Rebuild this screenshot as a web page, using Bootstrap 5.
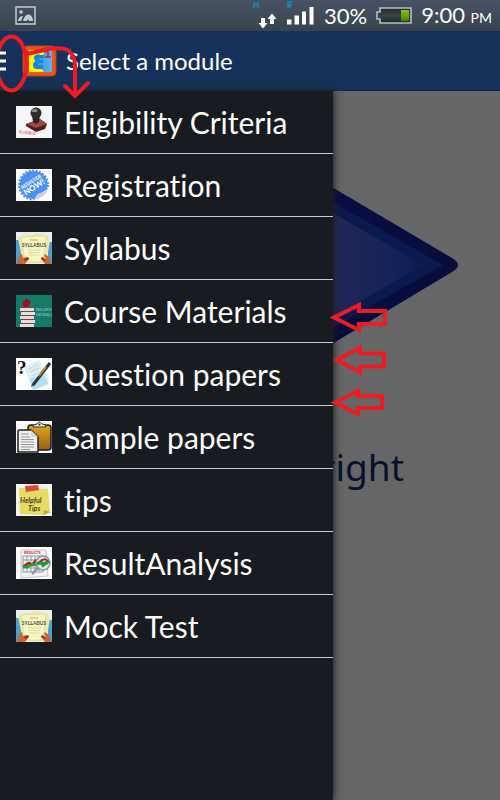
<!DOCTYPE html>
<html lang="en">
<head>
<meta charset="utf-8">
<meta name="viewport" content="width=device-width, initial-scale=1">
<title>Select a module</title>
<link href="https://cdn.jsdelivr.net/npm/bootstrap@5.3.0/dist/css/bootstrap.min.css" rel="stylesheet">
<style>
  body { font-family: Lato, "Open Sans", sans-serif; font-variant-ligatures: none; background: #666; color: #fff; }
  .status-bar { height: 31px; background: linear-gradient(#475364, #38434e); padding: 0 8px 0 15px; }
  .status-text { font-size: 22px; line-height: 31px; }
  .status-text small { font-size: 14px; }
  .title-bar { height: 60px; background: #16325a; border-bottom: 1px solid #0f2649; }
  .page-title { font-size: 24px; line-height: 30px; }
  .stage > * { grid-area: 1 / 1; }
  .stage { grid-template-columns: 100%; }
  .swipe-hint { font-family: "Noto Sans", sans-serif; font-size: 37px; line-height: 48px; color: #06122b; padding-right: 96px; margin-top: 32px; }
  .drawer { width: 66.6%; background: #181b1f; box-shadow: 1px 0 7px #222; z-index: 1; }
  .module { height: 63px; padding: 0 16px; gap: 12px; border-bottom: 1px solid #c5cac9; color: #fff; font-size: 30px; line-height: 36px; }
  .module svg { width: 36px; height: 32px; }
  .module:hover { color: #fff; background: #22272d; }
  .notes { pointer-events: none; z-index: 2; }
</style>
<script src="https://cdn.jsdelivr.net/npm/bootstrap@5.3.0/dist/js/bootstrap.bundle.min.js"></script>
</head>
<body class="min-vh-100 d-flex flex-column position-relative overflow-x-hidden">
<header>
  <div class="status-bar d-flex align-items-center justify-content-between">
    <svg width="21" height="19" viewBox="0 0 21 19" aria-hidden="true"><path d="M1 1h19v17H1z" fill="none" stroke="#c5cacf" stroke-width="1.5"/><circle cx="6" cy="6" r="1.8" fill="#c5cacf"/><path d="M3 15c.5-3 2-5 5-5l-2 5zM8 15c1-4 3-7 6-6.500 2.500.5 4 3 4 6.500h-4l-1-2-1 2z" fill="#c5cacf"/></svg>
    <div class="d-flex align-items-center">
      <svg width="64" height="31" viewBox="252 0 64 31" aria-hidden="true">
        <g fill="none" stroke="#128bc8" stroke-width="1.400"><path d="M254 2v6M258 2v6M254 5h4M288 8V2h3v3h-3l3 3"/></g>
        <path d="M261 18h4v5h2.500L263 28.500 258.500 23h2.500zM270 24h4v-5h2.500L272 13.500 267.500 19h2.500z" fill="#fff"/>
        <path d="M287 19.500h4.500v5H287zM294.500 15.500h4.500v9h-4.500zM302 11.500h4v13h-4zM309.500 7h4v17.500h-4z" fill="#fff"/>
      </svg>
      <span class="status-text ms-2">30%</span>
      <svg class="ms-2" width="38" height="19" viewBox="0 0 38 19" aria-hidden="true">
        <defs><linearGradient id="cell" x2="0" y2="1"><stop stop-color="#252a2d"/><stop offset=".5" stop-color="#3c4246"/><stop offset="1" stop-color="#22272a"/></linearGradient><linearGradient id="charge" x2="0" y2="1"><stop stop-color="#7fbf2d"/><stop offset=".5" stop-color="#64a90c"/><stop offset="1" stop-color="#3d8200"/></linearGradient></defs>
        <path d="M5 2h31v15H5v-4H2V6h3z" fill="url(#cell)" stroke="#b7bcc1" stroke-width="1.600"/>
        <path d="M26 4h8v11h-8z" fill="url(#charge)"/>
      </svg>
      <span class="status-text ms-2">9:00 <small>PM</small></span>
    </div>
  </div>
  <nav class="title-bar d-flex align-items-center">
    <button type="button" class="btn p-0 border-0 d-flex" aria-label="Menu"><svg width="22" height="20" viewBox="0 0 22 20"><path d="M0 2h6M0 10h6M0 18h6" stroke="#fff" stroke-width="3"/></svg></button>
    <svg width="36" height="32" viewBox="0 0 36 32" aria-hidden="true">
      <defs><linearGradient id="sky"><stop stop-color="#1689e2"/><stop offset="1" stop-color="#5fb3ed"/></linearGradient></defs>
      <rect x="1" y="1" width="33" height="30" rx="4" fill="#e4581c" stroke="#b8420e"/>
      <rect x="7" y="5" width="23" height="22" fill="url(#sky)"/>
      <path d="M7 5h13l2 3-1 3-5-2-4 2 2 3-1 3-2 3 3 3 6 1 2 3H7z" fill="#f7f209"/>
      <path d="M22 10h-6q-4 0-4 3 0 2 2 3-3 1-3 4 0 4 4 4h6v-4h-5q-1-2 1-2h4v-3h-4q-1-2 1-2h4z" fill="#1487df"/>
      <path d="M23 7l3-1v6m-3 0h6" stroke="#d51b2b" stroke-width="1.500" fill="none"/>
    </svg>
    <h1 class="page-title fw-normal m-0 ms-2">Select a module</h1>
  </nav>
</header>
<div class="stage d-grid flex-grow-1">
  <main>
    <svg class="d-block w-100" viewBox="0 91 500 320" aria-hidden="true">
      <defs><linearGradient id="face" gradientUnits="userSpaceOnUse" x1="333" y1="0" x2="425" y2="0"><stop stop-color="#1f2854"/><stop offset=".6" stop-color="#16235a"/><stop offset="1" stop-color="#0b1b53"/></linearGradient><linearGradient id="rim" x2="0" y2="1"><stop stop-color="#0c0d46"/><stop offset="1" stop-color="#040c35"/></linearGradient></defs>
      <path d="M220 121L452 258q12 7 0 14L220 411z" fill="url(#rim)"/>
      <path d="M240 149L443 265 240 381z" fill="#0a194e"/>
      <path d="M250 165L423 265 250 365z" fill="url(#face)"/>
    </svg>
    <p class="swipe-hint text-end mb-0">right</p>
  </main>
  <nav class="drawer" aria-label="Modules">
    <a href="#" class="module d-flex align-items-center text-decoration-none">
      <svg viewBox="0 0 36 32" aria-hidden="true"><rect width="36" height="32" fill="#f3f5f6"/><path d="M10 18l14-5 7 5-2 5-9 3-10-6z" fill="#56191a"/><path d="M10 18l14-5 7 5-11 4z" fill="#9a4a40"/><path d="M16 9h8l-1 7q-3 3-6 0z" fill="#292424"/><circle cx="20" cy="7" r="5.500" fill="#302d2d"/><ellipse cx="18.500" cy="4.500" rx="3" ry="1.500" fill="#918b88"/><text x="3" y="27" font-size="4" font-weight="700" fill="#e65561" transform="rotate(7 3 27)">ELIGIBLE</text></svg>
      <span>Eligibility Criteria</span></a>
    <a href="#" class="module d-flex align-items-center text-decoration-none">
      <svg viewBox="0 0 36 32" aria-hidden="true"><rect width="36" height="32" fill="#fff"/><circle cx="17.500" cy="16" r="14" fill="#4b91f4"/><circle cx="17.500" cy="16" r="14.500" fill="none" stroke="#4b91f4" stroke-width="2" stroke-dasharray="2 1.500"/><path d="M18 31q6-7 14-11l4 2v10H18z" fill="#fff"/><path d="M18 31q2-5 5-7 5 0 9-4-3 8-14 11z" fill="#c8cdd4"/><g transform="rotate(-32 17 16)" fill="#fff" text-anchor="middle" font-weight="900"><text x="17" y="14" font-size="5">REGISTER</text><text x="17" y="21" font-size="8">NOW!</text></g></svg>
      <span>Registration</span></a>
    <a href="#" class="module d-flex align-items-center text-decoration-none">
      <svg viewBox="0 0 36 32" aria-hidden="true"><g id="syllabus-card"><rect width="36" height="32" fill="#e8eef0"/><path d="M0 8h5v24H0zM32 10h4v22h-4z" fill="#4f9ed0"/><path d="M2 6l8-4 5 1 5-2 12 3 2 5-4 22H7z" fill="#e9e9a5"/><path d="M5 5l25-1-3 26H9z" fill="#f6f5c4" stroke="#d7d992" stroke-width=".6"/><path d="M14 8h8" stroke="#e5a34a"/><text x="18" y="15" font-size="5" font-weight="700" text-anchor="middle" fill="#4d5137">SYLLABUS</text><path d="M12 18h13M12 20.500h12M13 23h10" stroke="#d8d886" stroke-width=".8"/><path d="M1 32l2-8 3-2 1 4 4-1 2 2-4 5zM35 32l-1-6-5-4-1 2 2 3-4-2-1 2 4 5z" fill="#c96735"/><path d="M8 27l4-2 1 2-4 2zM26 25l4 3-1 1-4-2z" fill="#a82720"/></g></svg>
      <span>Syllabus</span></a>
    <a href="#" class="module d-flex align-items-center text-decoration-none">
      <svg viewBox="0 0 36 32" aria-hidden="true"><rect width="36" height="32" fill="#17796a"/><path d="M4 13h14v3H4zM5 17h14v3H5zM4 21h14v3H4zM5 25h14v3H5zM4 29h14v3H4z" fill="#e5dddb"/><path d="M4 12.500h14M5 16.500h14M4 20.500h14M5 24.500h14M4 28.500h14" stroke="#734246"/><path d="M11 5q4-2 3 3 0 4-4 4-4 0-3-5 1-3 4-2z" fill="#a80d1c"/><path d="M10.500 6V3.500" stroke="#471e18"/><g font-size="3" fill="#a5d2c8"><text x="20" y="16">RESOURCE</text><text x="20" y="21">MATERIALS</text></g></svg>
      <span>Course Materials</span></a>
    <a href="#" class="module d-flex align-items-center text-decoration-none">
      <svg viewBox="0 0 36 32" aria-hidden="true"><rect width="36" height="32" fill="#fff"/><path d="M8 9l15-7 10 20-16 10z" fill="#dceef7"/><path d="M14 21l13-5 6 10-16 6z" fill="#aee0f1"/><path d="M13 11l8-4M14 14l9-4M16 18l6-3" stroke="#b9c9d1" stroke-width=".8"/><text x="1" y="16" font-family="Liberation Serif, serif" font-size="19" font-weight="700" fill="#111">?</text><path d="M17 27L34 5" stroke="#30343a" stroke-width="3"/><path d="M23 18l7-9" stroke="#bd812f" stroke-width="2"/><path d="M15 29l1-3 2 1z" fill="#222"/></svg>
      <span>Question papers</span></a>
    <a href="#" class="module d-flex align-items-center text-decoration-none">
      <svg viewBox="0 0 36 32" aria-hidden="true"><defs><linearGradient id="board" x2="0" y2="1"><stop stop-color="#e4a51e"/><stop offset="1" stop-color="#956018"/></linearGradient></defs><rect width="36" height="32" fill="#fff"/><rect x="12" y="4" width="23" height="25" rx="3" fill="url(#board)" stroke="#1b1b1b" stroke-width="1.500"/><path d="M17 6q0-3 4-3 2-4 5 0 4 0 4 3z" fill="#e7e9ea" stroke="#333"/><circle cx="23.500" cy="3.500" r="1" fill="#222"/><path d="M3 9h12l7 7v15H2V10z" fill="#eee" stroke="#222" stroke-width="1.500"/><path d="M15 9v7h7z" fill="#cbdde8"/><path d="M5 13h8M5 16h9M5 18.500h13M5 21h13M5 23.500h13M5 26h13M5 28.500h9" stroke="#999"/></svg>
      <span>Sample papers</span></a>
    <a href="#" class="module d-flex align-items-center text-decoration-none">
      <svg viewBox="0 0 36 32" aria-hidden="true"><rect width="36" height="32" fill="#f4f3ef"/><path d="M3 4l29 1 2 24-7 2-23-1z" fill="#e7db62"/><path d="M27 31l1-5 6 2z" fill="#b9aa45"/><path d="M9 2l13-1 1 5-13 2z" fill="#da4639"/><g font-weight="700" fill="#484421" font-style="italic" font-size="7"><text x="4" y="19">Helpful</text><text x="12" y="27">Tips</text></g></svg>
      <span>tips</span></a>
    <a href="#" class="module d-flex align-items-center text-decoration-none">
      <svg viewBox="0 0 36 32" aria-hidden="true"><rect width="36" height="32" fill="#fff"/><path d="M5 3h25l2 26-27 2z" fill="#f1f1f3" stroke="#c1c4c9"/><text x="8" y="7" font-size="4" font-weight="700" fill="#dc2934">RESULTS</text><path d="M7 9h20v16H7zM7 13h20M7 17h20M7 21h20M11 9v16M15 9v16M19 9v16M23 9v16" fill="none" stroke="#858990" stroke-width=".8"/><path d="M7 20l6-4 3 2 4-5" fill="none" stroke="#ae1d24" stroke-width="2.500"/><path d="M7 20l5 0 4-3 4 1" fill="none" stroke="#18a62c" stroke-width="2.500"/><circle cx="27" cy="16" r="7" fill="#d8eeec" fill-opacity=".8" stroke="#8a949e" stroke-width="1.500"/><path d="M21 17l4-2 2 3 6-4" fill="none" stroke="#199b32" stroke-width="3.500"/><path d="M24 14l5-2 3 2" fill="none" stroke="#c02429" stroke-width="2"/><path d="M22 21l-6 6" stroke="#8d98aa" stroke-width="2.500"/></svg>
      <span>ResultAnalysis</span></a>
    <a href="#" class="module d-flex align-items-center text-decoration-none">
      <svg viewBox="0 0 36 32" aria-hidden="true"><use href="#syllabus-card"/></svg>
      <span>Mock Test</span></a>
  </nav>
</div>
<svg class="notes position-absolute top-0 start-0 w-100" viewBox="0 0 500 430" fill="none" stroke="#ed1c24" aria-hidden="true">
  <ellipse cx="11.500" cy="63.500" rx="15" ry="27" stroke-width="4"/>
  <g stroke-width="4" stroke-linecap="round"><path d="M27 54L48 49Q63 47 69 51 75 56 75 66V93"/><path d="M65 86l10 10 13-13"/></g>
  <g stroke-width="4" stroke-linejoin="miter">
    <path d="M334 317.500L359 305v6h26v13h-26v6z"/>
    <path d="M337 360L360 347.500v6h24v13h-24v6z"/>
    <path d="M335 402.500L358 391v5h24v12h-24v6z"/>
  </g>
</svg>
</body>
</html>
